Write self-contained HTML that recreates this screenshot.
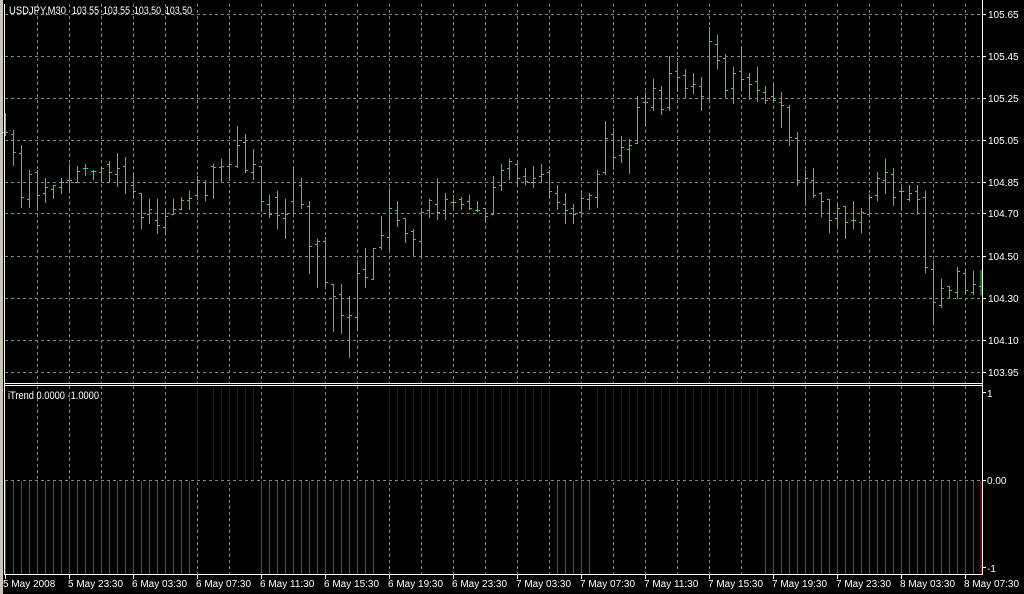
<!DOCTYPE html>
<html><head><meta charset="utf-8"><style>
html,body{margin:0;padding:0;background:#000;}
svg{display:block;}
text{font-family:"Liberation Sans",sans-serif;font-size:10px;fill:#fff;white-space:pre;}
.h{font-size:11px;}
</style></head><body>
<svg width="1024" height="594" viewBox="0 0 1024 594" xmlns="http://www.w3.org/2000/svg" xml:space="preserve">
<rect width="1024" height="594" fill="#000"/>
<rect x="0" y="0" width="3" height="594" fill="#c8c4bc"/>
<g stroke="#778899" stroke-width="1" stroke-dasharray="3,3" fill="none">
<path d="M37.5 4V383M69.5 4V383M101.5 4V383M133.5 4V383M165.5 4V383M197.5 4V383M229.5 4V383M261.5 4V383M293.5 4V383M325.5 4V383M357.5 4V383M389.5 4V383M421.5 4V383M453.5 4V383M485.5 4V383M517.5 4V383M549.5 4V383M581.5 4V383M613.5 4V383M645.5 4V383M677.5 4V383M709.5 4V383M741.5 4V383M773.5 4V383M805.5 4V383M837.5 4V383M869.5 4V383M901.5 4V383M933.5 4V383M965.5 4V383"/>
<path d="M37.5 386V574M69.5 386V574M101.5 386V574M133.5 386V574M165.5 386V574M197.5 386V574M229.5 386V574M261.5 386V574M293.5 386V574M325.5 386V574M357.5 386V574M389.5 386V574M421.5 386V574M453.5 386V574M485.5 386V574M517.5 386V574M549.5 386V574M581.5 386V574M613.5 386V574M645.5 386V574M677.5 386V574M709.5 386V574M741.5 386V574M773.5 386V574M805.5 386V574M837.5 386V574M869.5 386V574M901.5 386V574M933.5 386V574M965.5 386V574"/>
<path d="M5 14.5H982M5 56.5H982M5 98.5H982M5 140.5H982M5 182.5H982M5 213.5H982M5 256.5H982M5 298.5H982M5 340.5H982M5 372.5H982M5 480.5H982"/>
</g>
<g stroke="#ff0000" stroke-width="1">
<path d="M5.5 481V574M13.5 481V574M21.5 481V574M29.5 481V574M37.5 481V574M45.5 481V574M53.5 481V574M61.5 481V574M69.5 481V574M77.5 481V574M85.5 481V574M93.5 481V574M101.5 481V574M109.5 481V574M117.5 481V574M125.5 481V574M133.5 481V574M141.5 481V574M149.5 481V574M157.5 481V574M165.5 481V574M173.5 481V574M181.5 481V574M189.5 481V574M261.5 481V574M269.5 481V574M277.5 481V574M285.5 481V574M293.5 481V574M301.5 481V574M309.5 481V574M317.5 481V574M325.5 481V574M333.5 481V574M341.5 481V574M349.5 481V574M357.5 481V574M365.5 481V574M373.5 481V574M557.5 481V574M565.5 481V574M573.5 481V574M581.5 481V574M589.5 481V574M765.5 481V574M773.5 481V574M781.5 481V574M789.5 481V574M797.5 481V574M805.5 481V574M813.5 481V574M821.5 481V574M829.5 481V574M837.5 481V574M845.5 481V574M853.5 481V574M861.5 481V574M869.5 481V574M877.5 481V574M885.5 481V574M893.5 481V574M901.5 481V574M909.5 481V574M917.5 481V574M925.5 481V574M933.5 481V574M941.5 481V574M949.5 481V574M957.5 481V574M965.5 481V574M973.5 481V574M981 481V574"/>
</g>
<g stroke="#0000ff" stroke-width="1">
<path d="M197.5 386V480M213.5 386V480M221.5 386V480M229.5 386V480M237.5 386V480M245.5 386V480M253.5 386V480M293.5 386V480M389.5 386V480M397.5 386V480M405.5 386V480M413.5 386V480M421.5 386V480M429.5 386V480M437.5 386V480M445.5 386V480M453.5 386V480M461.5 386V480M469.5 386V480M477.5 386V480M485.5 386V480M493.5 386V480M501.5 386V480M509.5 386V480M517.5 386V480M525.5 386V480M533.5 386V480M541.5 386V480M549.5 386V480M597.5 386V480M605.5 386V480M613.5 386V480M621.5 386V480M629.5 386V480M637.5 386V480M645.5 386V480M653.5 386V480M661.5 386V480M669.5 386V480M677.5 386V480M685.5 386V480M693.5 386V480M701.5 386V480M709.5 386V480M717.5 386V480M725.5 386V480M733.5 386V480M741.5 386V480M749.5 386V480M757.5 386V480"/>
</g>
<path stroke="#1fe61f" stroke-width="1" fill="none" d="
M5.5 113V136M3 132.5h2M6 132.5h2
M13.5 130V166M11 134.5h2M14 152.5h2
M21.5 145V208M19 153.5h2M22 197.5h2
M29.5 170V208M27 199.5h2M30 174.5h2
M37.5 170V209M35 172.5h2M38 195.5h2
M45.5 178V203M43 193.5h2M46 187.5h2
M53.5 185V199M51 189.5h2M54 185.5h2
M61.5 178V194M59 187.5h2M62 182.5h2
M69.5 164V192M67 180.5h2M70 180.5h2
M77.5 166V183M75 182.5h2M78 171.5h2
M85.5 164V176M83 168.5h2M86 168.5h2
M93.5 170V180M91 171.5h2M94 171.5h2
M101.5 168V183M99 172.5h2M102 168.5h2
M109.5 161V183M107 164.5h2M110 172.5h2
M117.5 153V187M115 174.5h2M118 168.5h2
M125.5 157V194M123 166.5h2M126 182.5h2
M133.5 174V198M131 185.5h2M134 191.5h2
M141.5 193V229M139 193.5h2M142 217.5h2
M149.5 199V224M147 214.5h2M150 209.5h2
M157.5 199V234M155 220.5h2M158 225.5h2
M165.5 209V233M163 227.5h2M166 216.5h2
M173.5 199V215M171 214.5h2M174 209.5h2
M181.5 197V210M179 209.5h2M182 200.5h2
M189.5 191V210M187 200.5h2M190 198.5h2
M197.5 176V200M195 195.5h2M198 180.5h2
M205.5 180V201M203 182.5h2M206 195.5h2
M213.5 164V199M211 166.5h2M214 167.5h2
M221.5 159V182M219 167.5h2M222 166.5h2
M229.5 150V181M227 166.5h2M230 164.5h2
M237.5 126V168M235 166.5h2M238 145.5h2
M245.5 134V173M243 142.5h2M246 170.5h2
M253.5 149V180M251 172.5h2M254 164.5h2
M261.5 166V212M259 166.5h2M262 201.5h2
M269.5 195V218M267 204.5h2M270 214.5h2
M277.5 191V229M275 197.5h2M278 215.5h2
M285.5 199V239M283 218.5h2M286 214.5h2
M293.5 168V214M291 201.5h2M294 182.5h2
M301.5 178V209M299 185.5h2M302 204.5h2
M309.5 201V274M307 206.5h2M310 246.5h2
M317.5 239V288M315 244.5h2M318 241.5h2
M325.5 237V287M323 241.5h2M326 282.5h2
M333.5 284V332M331 284.5h2M334 296.5h2
M341.5 284V334M339 294.5h2M342 315.5h2
M349.5 296V358M347 317.5h2M350 315.5h2
M357.5 260V329M355 317.5h2M358 273.5h2
M365.5 248V288M363 269.5h2M366 277.5h2
M373.5 248V280M371 279.5h2M374 248.5h2
M381.5 216V250M379 247.5h2M382 235.5h2
M389.5 188V251M387 237.5h2M390 208.5h2
M397.5 201V227M395 210.5h2M398 220.5h2
M405.5 218V243M403 218.5h2M406 233.5h2
M413.5 229V256M411 231.5h2M414 239.5h2
M421.5 210V258M419 241.5h2M422 212.5h2
M429.5 199V218M427 210.5h2M430 200.5h2
M437.5 178V220M435 204.5h2M438 212.5h2
M445.5 193V220M443 210.5h2M446 199.5h2
M453.5 195V210M451 202.5h2M454 202.5h2
M461.5 197V210M459 199.5h2M462 204.5h2
M469.5 195V210M467 201.5h2M470 208.5h2
M477.5 201V212M475 210.5h2M478 210.5h2
M485.5 208V222M483 208.5h2M486 216.5h2
M493.5 176V215M491 214.5h2M494 187.5h2
M501.5 164V191M499 185.5h2M502 170.5h2
M509.5 159V180M507 168.5h2M510 161.5h2
M517.5 160V187M515 164.5h2M518 178.5h2
M525.5 168V185M523 176.5h2M526 181.5h2
M533.5 166V188M531 182.5h2M534 178.5h2
M541.5 164V182M539 176.5h2M542 174.5h2
M549.5 170V199M547 172.5h2M550 191.5h2
M557.5 185V210M555 193.5h2M558 202.5h2
M565.5 193V224M563 204.5h2M566 210.5h2
M573.5 204V224M571 208.5h2M574 214.5h2
M581.5 193V218M579 212.5h2M582 198.5h2
M589.5 193V210M587 199.5h2M590 195.5h2
M597.5 170V208M595 197.5h2M598 174.5h2
M605.5 121V175M603 172.5h2M606 138.5h2
M613.5 128V170M611 134.5h2M614 157.5h2
M621.5 136V163M619 155.5h2M622 147.5h2
M629.5 139V174M627 149.5h2M630 145.5h2
M637.5 96V144M635 143.5h2M638 107.5h2
M645.5 92V126M643 102.5h2M646 102.5h2
M653.5 79V111M651 107.5h2M654 88.5h2
M661.5 86V115M659 90.5h2M662 109.5h2
M669.5 56V111M667 107.5h2M670 73.5h2
M677.5 62V92M675 71.5h2M678 77.5h2
M685.5 69V98M683 75.5h2M686 88.5h2
M693.5 73V94M691 86.5h2M694 84.5h2
M701.5 77V111M699 86.5h2M702 96.5h2
M709.5 27V101M707 98.5h2M710 41.5h2
M717.5 35V69M715 44.5h2M718 60.5h2
M725.5 54V98M723 58.5h2M726 90.5h2
M733.5 67V104M731 88.5h2M734 73.5h2
M741.5 48V89M739 71.5h2M742 79.5h2
M749.5 73V100M747 77.5h2M750 84.5h2
M757.5 67V102M755 81.5h2M758 90.5h2
M765.5 86V104M763 92.5h2M766 100.5h2
M773.5 84V103M771 96.5h2M774 100.5h2
M781.5 92V128M779 102.5h2M782 105.5h2
M789.5 105V146M787 107.5h2M790 137.5h2
M797.5 132V186M795 138.5h2M798 180.5h2
M805.5 170V206M803 182.5h2M806 178.5h2
M813.5 168V198M811 180.5h2M814 195.5h2
M821.5 192V217M819 193.5h2M822 201.5h2
M829.5 199V233M827 199.5h2M830 220.5h2
M837.5 204V228M835 218.5h2M838 208.5h2
M845.5 206V239M843 206.5h2M846 222.5h2
M853.5 201V229M851 220.5h2M854 220.5h2
M861.5 208V233M859 222.5h2M862 212.5h2
M869.5 194V215M867 214.5h2M870 197.5h2
M877.5 172V201M875 195.5h2M878 178.5h2
M885.5 159V194M883 180.5h2M886 172.5h2
M893.5 168V206M891 174.5h2M894 197.5h2
M901.5 187V210M899 191.5h2M902 191.5h2
M909.5 185V201M907 199.5h2M910 193.5h2
M917.5 185V215M915 191.5h2M918 199.5h2
M925.5 191V273M923 197.5h2M926 267.5h2
M933.5 260V325M931 269.5h2M934 302.5h2
M941.5 279V308M939 305.5h2M942 288.5h2
M949.5 286V299M947 286.5h2M950 290.5h2
M957.5 267V299M955 292.5h2M958 271.5h2
M965.5 270V294M963 273.5h2M966 290.5h2
M973.5 271V295M971 292.5h2M974 284.5h2
M981 270V295M979 286.5h2"/>
<g stroke="#fff" stroke-width="1" fill="none">
<path d="M4.5 4V575M982.5 0V575M4 383.5H983M4 385.5H983M4 574.5H983"/>
<path d="M983 14.5h3M983 56.5h3M983 98.5h3M983 140.5h3M983 182.5h3M983 213.5h3M983 256.5h3M983 298.5h3M983 340.5h3M983 372.5h3M983 392.5h3M983 480.5h3M983 567.5h3"/>
<path d="M5.5 575v4M69.5 575v4M133.5 575v4M197.5 575v4M261.5 575v4M325.5 575v4M389.5 575v4M453.5 575v4M517.5 575v4M581.5 575v4M645.5 575v4M709.5 575v4M773.5 575v4M837.5 575v4M901.5 575v4M965.5 575v4"/>
</g>
<text class="h" x="9" y="14" textLength="57" lengthAdjust="spacingAndGlyphs">USDJPY,M30</text>
<text class="h" x="72" y="14" textLength="27" lengthAdjust="spacingAndGlyphs">103.55</text>
<text class="h" x="103" y="14" textLength="27" lengthAdjust="spacingAndGlyphs">103.55</text>
<text class="h" x="134" y="14" textLength="27" lengthAdjust="spacingAndGlyphs">103.50</text>
<text class="h" x="165" y="14" textLength="27" lengthAdjust="spacingAndGlyphs">103.50</text>
<text class="h" x="8" y="399" textLength="91" lengthAdjust="spacingAndGlyphs">iTrend 0.0000 -1.0000</text>
<g>
<text x="988" y="18">105.65</text>
<text x="988" y="60">105.45</text>
<text x="988" y="102">105.25</text>
<text x="988" y="144">105.05</text>
<text x="988" y="186">104.85</text>
<text x="988" y="217">104.70</text>
<text x="988" y="260">104.50</text>
<text x="988" y="302">104.30</text>
<text x="988" y="344">104.10</text>
<text x="988" y="376">103.95</text>
<text x="987" y="397">1</text>
<text x="987" y="484">0.00</text>
<text x="987" y="572">-1</text>
</g>
<g>
<text x="3" y="587">5 May 2008</text>
<text x="68" y="587">5 May 23:30</text>
<text x="132" y="587">6 May 03:30</text>
<text x="196" y="587">6 May 07:30</text>
<text x="260" y="587">6 May 11:30</text>
<text x="324" y="587">6 May 15:30</text>
<text x="388" y="587">6 May 19:30</text>
<text x="452" y="587">6 May 23:30</text>
<text x="516" y="587">7 May 03:30</text>
<text x="580" y="587">7 May 07:30</text>
<text x="644" y="587">7 May 11:30</text>
<text x="708" y="587">7 May 15:30</text>
<text x="772" y="587">7 May 19:30</text>
<text x="836" y="587">7 May 23:30</text>
<text x="900" y="587">8 May 03:30</text>
<text x="964" y="587">8 May 07:30</text>
</g>
</svg>
</body></html>
